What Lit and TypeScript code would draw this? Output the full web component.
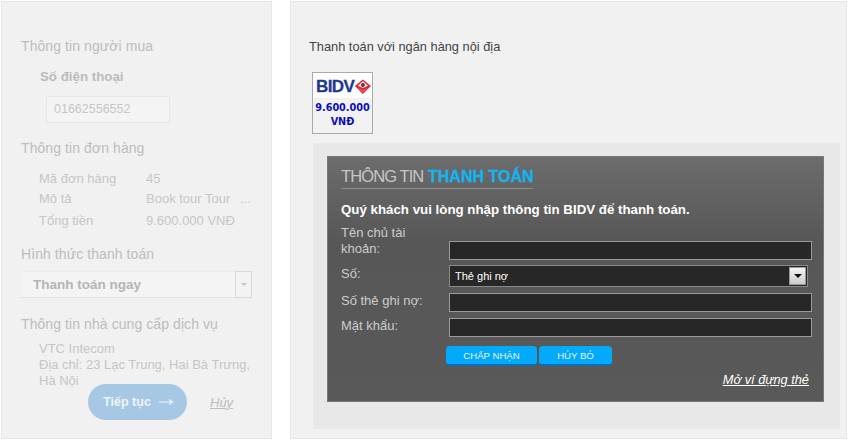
import { LitElement, html, css } from "lit";
import { customElement } from "lit/decorators.js";

@customElement("app-root")
export class AppRoot extends LitElement {
  static styles = css`
    :host { display: block; width: 849px; height: 442px; background: #fff; font-family: "Liberation Sans", Arial, sans-serif; overflow: hidden; }
    * { box-sizing: border-box; }
    .page { display: flex; gap: 18px; padding: 1px 2px 0 1px; height: 438px; }
    .panel { background: #f1f1f1; border: 1px solid #e7e7e7; height: 438px; }
    .left { width: 271px; padding: 36px 18px 0 19px; flex: none; color: #c4c4c4; }
    .right { width: 557px; flex: none; padding: 37px 6px 0 18px; }
    h3 { margin: 0; font-weight: normal; font-size: 14px; line-height: 16px; color: #bdbdbd; letter-spacing: 0.08px; white-space: nowrap; }
    .phone-label { font-weight: bold; font-size: 13.3px; line-height: 16px; color: #bbb; margin: 15px 0 0 19px; }
    .phone { margin: 11px 0 17px 25px; width: 124px; height: 27px; border: 1px solid #e6e6e6; background: #f4f4f4; font-size: 12.5px; line-height: 25px; padding-left: 7px; color: #c6c6c6; border-radius: 2px; }
    .rows { margin: 14px 0 17px 18px; display: grid; grid-template-columns: 107px 1fr; row-gap: 3px; font-size: 13px; line-height: 17px; color: #c6c6c6; white-space: nowrap; }
    .last { margin-top: 2px; }
    .ell { display: inline-block; margin-left: 6px; }
    .select { margin: 9px 0 18px 0; width: 231px; height: 27px; display: flex; border-top: 1px solid #ececec; border-bottom: 1px solid #e4e4e4; background: #f4f4f4; }
    .select span { flex: 1; font-weight: bold; font-size: 13.5px; line-height: 25px; color: #b5b5b5; padding-left: 12px; }
    .select i { width: 17px; border: 1px solid #d8d8d8; background: #f3f3f3; display: flex; align-items: center; justify-content: center; margin-top: -1px; margin-bottom: -1px; }
    .select i::after { content: ""; border: 3px solid transparent; border-top: 3px solid #c8c8c8; margin-top: 3px; }
    .addr { margin: 9px 0 0 18px; font-size: 13px; line-height: 16px; color: #c6c6c6; white-space: nowrap; }
    .actions { display: flex; align-items: center; margin: -5px 0 0 67px; gap: 23px; position: relative; }
    .go { width: 99px; height: 36px; border-radius: 18px; background: #a6c8e4; color: #eef4fa; font-weight: bold; font-size: 12.5px; display: flex; align-items: center; justify-content: center; gap: 8px; padding-left: 2px; }
    .cancel { font-style: italic; text-decoration: underline; font-size: 13px; color: #bcbcbc; }
    .title { font-size: 12.8px; line-height: 16px; color: #444; white-space: nowrap; }
    .bank { margin: 17px 0 9px 3px; width: 61px; height: 62px; border: 1px solid #aaa; background: #f2f2f2; text-align: center; }
    .logo { height: 25px; background: #fff; display: flex; align-items: center; padding: 2px 0 0 3px; }
    .logo b { font-size: 17px; line-height: 20px; color: #1c3a8c; letter-spacing: -0.6px; -webkit-text-stroke: 0.3px #1c3a8c; }
    .amt { font-family: "DejaVu Sans", Verdana, sans-serif; font-weight: bold; font-size: 9.7px; line-height: 14px; color: #0d0dbb; margin-top: 3px; white-space: nowrap; }
    .wrap { margin: 0 0 0 4px; width: 527px; height: 286px; background: #e8e8e8; padding: 13px 0 0 14px; }
    .dark { width: 497px; height: 246px; border: 1px solid #777; background: linear-gradient(#6c6c6c, #575757 85px, #595959); padding: 8px 12px 0 13px; position: relative; }
    .head { display: inline-block; border-bottom: 1px solid #8c8c8c; font-size: 16.5px; line-height: 23px; height: 24px; white-space: nowrap; width: 192px; letter-spacing: -0.9px; color: #c6c6c6; }
    .head b { color: #12b5f0; letter-spacing: 0; margin-left: 1px; font-size: 16px; -webkit-text-stroke: 0.3px #12b5f0; }
    .intro { font-weight: bold; font-size: 13.3px; line-height: 16px; color: #fff; margin-top: 13px; white-space: nowrap; }
    .form { margin-top: 6px; display: grid; grid-template-columns: 108px 363px; row-gap: 6px; font-size: 13px; color: #ccc; line-height: 16px; }
    .form label { align-self: start; }
    .first { width: 80px; margin-top: 1px; }
    .f { height: 19px; border: 1px solid #9a9a9a; background: #272727; align-self: end; margin-top: 17px; }
    .f.plain { margin-top: 0; }
    .s { height: 22px; width: 359px; border: 1px solid #8a8a8a; background: #272727; color: #fff; font-size: 11px; line-height: 20px; padding-left: 5px; display: flex; justify-content: space-between; align-items: center; padding-right: 1px; margin-top: -1px; }
    .arrow { width: 17px; height: 18px; background: linear-gradient(#f4f4f4, #ccc); border: 1px solid #999; display: flex; align-items: center; justify-content: center; }
    .arrow::after { content: ""; border: 4px solid transparent; border-top: 4px solid #111; margin-top: 4px; }
    .btns { display: flex; gap: 2px; margin: 9px 0 0 105px; }
    .btn { height: 20px; background: #03a9fa; border-bottom: 2px solid #0a6fb8; border-radius: 4px; color: #eaf8ff; font-size: 9.6px; line-height: 19px; text-align: center; }
    .b1 { width: 91px; } .b2 { width: 73px; }
    .open { position: absolute; right: 14px; bottom: 13px; color: #fff; font-style: italic; text-decoration: underline; font-size: 12.8px; line-height: 16px; }
  `;

  render() {
    return html`<div class="page">
      <section class="panel left">
        <h3>Thông tin người mua</h3>
        <div class="phone-label">Số điện thoại</div>
        <div class="phone">01662556552</div>
        <h3>Thông tin đơn hàng</h3>
        <div class="rows">
          <span>Mã đơn hàng</span><span>45</span>
          <span>Mô tả</span><span>Book tour Tour <span class="ell">...</span></span>
          <span class="last">Tổng tiền</span><span class="last">9.600.000 VNĐ</span>
        </div>
        <h3>Hình thức thanh toán</h3>
        <div class="select"><span>Thanh toán ngay</span><i></i></div>
        <h3>Thông tin nhà cung cấp dịch vụ</h3>
        <div class="addr">VTC Intecom<br />Địa chỉ: 23 Lạc Trung, Hai Bà Trưng,<br />Hà Nội</div>
        <div class="actions">
          <div class="go">Tiếp tục
            <svg width="15" height="8" viewBox="0 0 15 8"><path d="M0 4h13M10 1.5l3.5 2.5L10 6.5" fill="none" stroke="#eef4fa" stroke-width="1.1"/></svg>
          </div>
          <span class="cancel">Hủy</span>
        </div>
      </section>
      <section class="panel right">
        <div class="title">Thanh toán với ngân hàng nội địa</div>
        <div class="bank">
          <div class="logo"><b>BIDV</b>
            <svg width="19" height="17" viewBox="0 0 19 17">
              <path d="M9.5 1l8.5 7-8.5 8.5L1 8z" fill="#d8262c"/>
              <path d="M9.5 3l5.5 4.6-5.5 2.4L4 7.6z" fill="#fff"/>
              <path d="M3.5 9.5l6 2.5 6-2.5-6 5.5z" fill="#e9545a"/>
              <circle cx="9.5" cy="7" r="2.3" fill="#d8262c"/>
              <rect x="8.9" y="4.8" width="1.2" height="4.4" fill="#1c3a8c"/>
            </svg>
          </div>
          <div class="amt">9.600.000<br />VNĐ</div>
        </div>
        <div class="wrap">
          <div class="dark">
            <div class="head">THÔNG TIN <b>THANH TOÁN</b></div>
            <div class="intro">Quý khách vui lòng nhập thông tin BIDV để thanh toán.</div>
            <div class="form">
              <label class="first">Tên chủ tài khoản:</label><div class="f"></div>
              <label>Số:</label>
              <div class="s">Thẻ ghi nợ<span class="arrow"></span></div>
              <label>Số thẻ ghi nợ:</label><div class="f plain"></div>
              <label>Mật khẩu:</label><div class="f plain"></div>
            </div>
            <div class="btns"><div class="btn b1">CHẤP NHẬN</div><div class="btn b2">HỦY BỎ</div></div>
            <span class="open">Mở ví đựng thẻ</span>
          </div>
        </div>
      </section>
    </div>`;
  }
}
